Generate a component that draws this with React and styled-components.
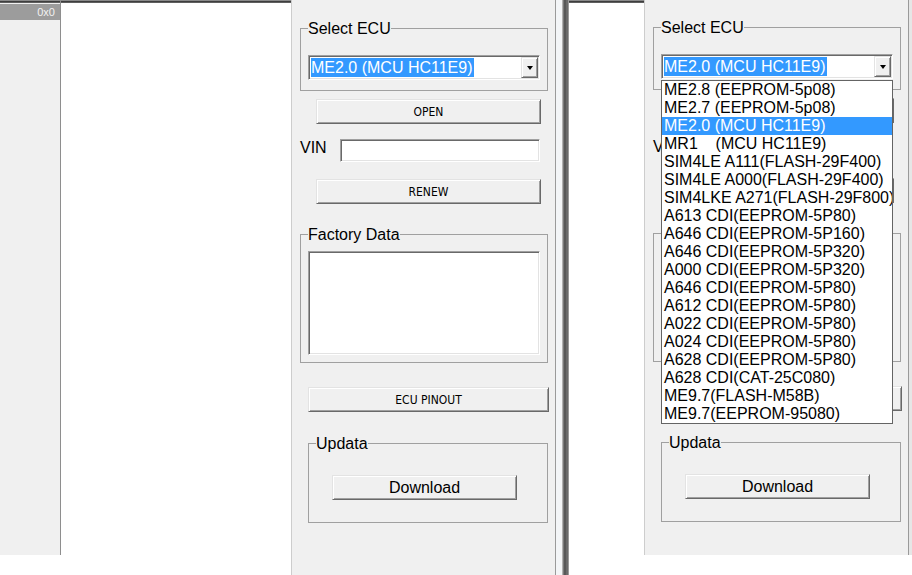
import React from "react";
import styled, { createGlobalStyle, css } from "styled-components";

const Global = createGlobalStyle`
  html, body { margin: 0; padding: 0; background: #fff; overflow: hidden; }
  #root { width: 912px; height: 575px; }
`;

const topStrip = (fill) => css`
  background: linear-gradient(
    to bottom,
    #8a8a8a 0 1px,
    #3e3e3e 1px 2px,
    #5e5e5e 2px 3px,
    ${fill} 3px
  );
`;

const Screen = styled.div`
  display: flex;
  width: 912px;
  height: 575px;
  overflow: hidden;
  font-family: "Liberation Sans", Arial, sans-serif;
  color: #000;
`;

const Shot = styled.div`
  display: flex;
  align-items: flex-start;
  width: ${(p) => p.$w}px;
  height: 575px;
  flex-shrink: 0;
`;

const Gutter = styled.div`
  width: 60px;
  height: 555px;
  flex-shrink: 0;
  box-sizing: border-box;
  padding-top: 4px;
  ${topStrip("#f0f0f0")}
`;

const GutterHeader = styled.div`
  height: 16px;
  background: #9c9c9c;
  color: #f2f2f2;
  font-size: 11px;
  line-height: 16px;
  text-align: right;
  padding-right: 5px;
`;

const Canvas = styled.div`
  width: ${(p) => p.$w}px;
  height: 555px;
  flex-shrink: 0;
  box-sizing: border-box;
  ${(p) => p.$divider && "border-left: 1px solid #8e8e8e;"}
  ${topStrip("#ffffff")}
`;

const Panel = styled.div`
  width: 265px;
  height: ${(p) => p.$h}px;
  flex-shrink: 0;
  box-sizing: border-box;
  background: #f0f0f0;
  border-left: 1px solid #cdcdcd;
  border-right: 1px solid #9a9a9a;
  padding-top: ${(p) => p.$pt}px;
  display: flex;
  flex-direction: column;
  align-items: flex-start;
`;

const Seam = styled.div`
  width: 13px;
  height: 575px;
  flex-shrink: 0;
  background: linear-gradient(
    to right,
    #f3f5f7 0 6px,
    #b0b0b0 6px 7px,
    #7a7a7a 7px 8px,
    #585858 8px 10px,
    #6a6a6a 10px 12px,
    #9a9a9a 12px 13px
  );
`;

const Edge = styled.div`
  width: 3px;
  height: 555px;
  flex-shrink: 0;
  background: #e6e6e6;
`;

const Group = styled.fieldset`
  box-sizing: border-box;
  width: ${(p) => p.$w}px;
  margin: ${(p) => p.$mt}px 0 0 ${(p) => p.$ml}px;
  padding: ${(p) => p.$pad};
  border: 1px solid #a0a0a0;
  min-width: 0;
  display: block;
  position: relative;
`;

const Legend = styled.legend`
  padding: 0;
  margin: 0;
  font-size: 16px;
  line-height: 17px;
  color: #000;
`;

const raised = css`
  border: 1px solid;
  border-color: #e3e3e3 #696969 #696969 #e3e3e3;
  box-shadow: inset 1px 1px 0 #ffffff, inset -1px -1px 0 #a0a0a0;
  background: #f0f0f0;
`;

const sunken = css`
  border: 1px solid;
  border-color: #a0a0a0 #ffffff #ffffff #a0a0a0;
  box-shadow: inset 1px 1px 0 #696969, inset -1px -1px 0 #e3e3e3;
  background: #fff;
`;

const Btn = styled.button`
  box-sizing: border-box;
  width: ${(p) => p.$w}px;
  height: 25px;
  margin: ${(p) => p.$mt || 0}px 0 0 ${(p) => p.$ml || 0}px;
  padding: 0;
  ${raised}
  color: #000;
  cursor: default;
  flex-shrink: 0;
  font-family: ${(p) =>
    p.$big
      ? '"Liberation Sans", Arial, sans-serif'
      : '"DejaVu Sans Condensed", "DejaVu Sans", sans-serif'};
  font-size: ${(p) => (p.$big ? 16 : 12)}px;
  font-stretch: ${(p) => (p.$big ? "normal" : "condensed")};
  line-height: 1;
`;

const ComboWrap = styled.div`
  position: relative;
  width: 232px;
`;

const Combo = styled.div`
  box-sizing: border-box;
  width: 232px;
  height: 25px;
  padding: 1px;
  display: flex;
  align-items: stretch;
  ${sunken}
`;

const ComboValue = styled.span`
  align-self: center;
  margin-left: 1px;
  padding: 0 1px 0 0;
  background: #3399ff;
  color: #fff;
  font-size: 16px;
  line-height: 19px;
  white-space: pre;
`;

const DropBtn = styled.span`
  margin-left: auto;
  width: 17px;
  box-sizing: border-box;
  ${raised}
  display: flex;
  align-items: center;
  justify-content: center;
  &::after {
    content: "";
    border-left: 3.5px solid transparent;
    border-right: 3.5px solid transparent;
    border-top: 4px solid #000;
    margin-top: 1px;
  }
`;

const List = styled.ul`
  position: absolute;
  top: calc(100% + 1px);
  left: 0;
  z-index: 5;
  width: 232px;
  box-sizing: border-box;
  margin: 0;
  padding: 0;
  list-style: none;
  background: #fff;
  border: 1px solid #646464;
`;

const Item = styled.li`
  height: 18px;
  line-height: 18px;
  padding-left: 2px;
  font-size: 16px;
  white-space: pre;
  overflow: hidden;
  color: ${(p) => (p.$sel ? "#fff" : "#000")};
  background: ${(p) => (p.$sel ? "#3399ff" : "transparent")};
`;

const VinRow = styled.div`
  display: flex;
  align-items: flex-start;
  margin: 15px 0 0 8px;
`;

const VinLabel = styled.span`
  width: 40px;
  font-size: 16px;
  line-height: 17px;
`;

const Field = styled.div`
  box-sizing: border-box;
  width: 200px;
  height: 23px;
  ${sunken}
`;

const Memo = styled.div`
  box-sizing: border-box;
  width: 232px;
  height: 104px;
  ${sunken}
`;

const ECU_LIST = [
  "ME2.8 (EEPROM-5p08)",
  "ME2.7 (EEPROM-5p08)",
  "ME2.0 (MCU HC11E9)",
  "MR1    (MCU HC11E9)",
  "SIM4LE A111(FLASH-29F400)",
  "SIM4LE A000(FLASH-29F400)",
  "SIM4LKE A271(FLASH-29F800)",
  "A613 CDI(EEPROM-5P80)",
  "A646 CDI(EEPROM-5P160)",
  "A646 CDI(EEPROM-5P320)",
  "A000 CDI(EEPROM-5P320)",
  "A646 CDI(EEPROM-5P80)",
  "A612 CDI(EEPROM-5P80)",
  "A022 CDI(EEPROM-5P80)",
  "A024 CDI(EEPROM-5P80)",
  "A628 CDI(EEPROM-5P80)",
  "A628 CDI(CAT-25C080)",
  "ME9.7(FLASH-M58B)",
  "ME9.7(EEPROM-95080)",
];

const SELECTED = "ME2.0 (MCU HC11E9)";

function EcuPanel({ open, h, pt }) {
  return (
    <Panel $h={h} $pt={pt}>
      <Group $w={248} $mt={0} $ml={8} $pad="18px 7px 10px 7px">
        <Legend>Select ECU</Legend>
        <ComboWrap>
          <Combo>
            <ComboValue>{SELECTED}</ComboValue>
            <DropBtn />
          </Combo>
          {open && (
            <List>
              {ECU_LIST.map((e) => (
                <Item key={e} $sel={e === SELECTED}>
                  {e}
                </Item>
              ))}
            </List>
          )}
        </ComboWrap>
      </Group>
      <Btn $w={225} $mt={8} $ml={24}>OPEN</Btn>
      <VinRow>
        <VinLabel>VIN</VinLabel>
        <Field />
      </VinRow>
      <Btn $w={225} $mt={17} $ml={24}>RENEW</Btn>
      <Group $w={248} $mt={22} $ml={8} $pad="8px 7px 7px 7px">
        <Legend>Factory Data</Legend>
        <Memo />
      </Group>
      <Btn $w={241} $mt={24} $ml={16}>ECU PINOUT</Btn>
      <Group $w={240} $mt={23} $ml={16} $pad="23px 7px 22px 7px">
        <Legend>Updata</Legend>
        <Btn $w={185} $ml={16} $big>Download</Btn>
      </Group>
    </Panel>
  );
}

export default function App() {
  return (
    <>
      <Global />
      <Screen>
        <Shot $w={569}>
          <Gutter>
            <GutterHeader>0x0</GutterHeader>
          </Gutter>
          <Canvas $w={231} $divider />
          <EcuPanel h={575} pt={20} />
          <Seam />
        </Shot>
        <Shot $w={343}>
          <Canvas $w={75} />
          <EcuPanel open h={555} pt={19} />
          <Edge />
        </Shot>
      </Screen>
    </>
  );
}
